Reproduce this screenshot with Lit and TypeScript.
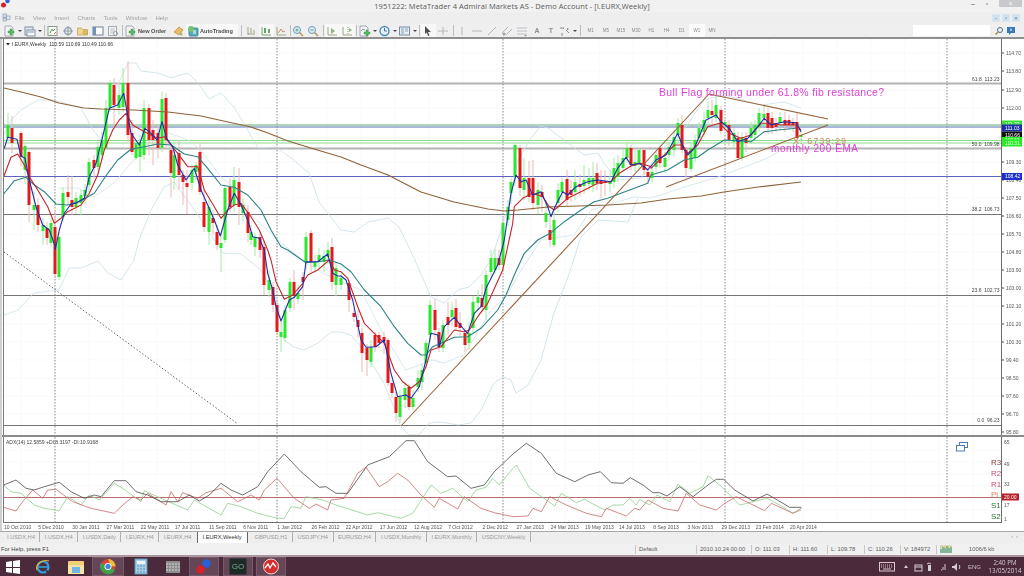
import { LitElement, css, html, svg } from 'lit'
import { customElement } from 'lit/decorators.js'

type Pt = [number, number]

// zoomed crop coords (3x) back to page coords
const seg = (ox: number, oy: number, a: number[]): Pt[] => {
  const out: Pt[] = []
  for (let i = 0; i < a.length; i += 2) out.push([ox + a[i] / 3, oy + a[i + 1] / 3])
  return out
}
const pts = (p: Pt[]) => p.map(([x, y]) => `${x.toFixed(1)},${y.toFixed(1)}`).join(' ')

const BLUE = [
  ...seg(0, 50, [10,295,20,262,48,268,60,318,72,325,85,390,105,470,125,525,145,540,163,590,163,598,175,540,190,490,210,462,225,460,250,445,265,380,285,340,305,260,325,175,350,165,368,130,378,185,390,250,415,285,432,235,450,250,468,270,483,215,497,265,515,290,530,345,555,390,580,355,600,420,620,465,640,510,658,558,680,480,700,430,720,465,740,510,755,560,775,565]),
  ...seg(0, 240, [790,30,800,100,815,150,825,200,840,243,865,180,880,172,905,140,915,65,950,65,980,42,995,100,1010,108]),
  ...seg(340, 200, [0,228,15,240,35,300,60,420,75,442,105,440,130,420,150,520,170,590,195,585,210,595,235,560,255,480,270,400,290,405,295,440,310,380,340,352,370,390,380,400,400,340,420,320,435,265,470,195,490,120]),
  ...seg(340, 60, [510,400,525,345,540,365,555,360,575,405,600,395,620,440,630,470,640,445,665,395,680,405,705,380,740,365,770,360,810,365,830,325,855,292,870,315,895,310,915,325]),
  ...seg(640, 70, [20,300,45,270,75,255,110,190,130,240,140,255,160,235,195,150,225,135,240,155,265,175,290,215,320,205,350,170,370,145,390,165,410,160,430,155,465,158,480,185]),
]
const RED = [
  ...seg(0, 50, [8,380,30,322,50,312,70,345,85,380,110,420,140,470,160,520,180,505,200,485,240,465,265,430,290,375,310,300,335,240,355,210,375,190,395,225,430,245,470,265,490,260,510,285,530,310,560,350,590,350,610,420,640,470,660,505,680,480,700,465,720,460,750,500,775,540]),
  ...seg(0, 240, [800,30,810,60,825,125,850,178,875,165,905,130,920,105,950,90,985,60,1000,90,1020,95]),
  ...seg(340, 200, [20,235,50,320,70,370,100,400,130,430,160,510,185,545,210,565,235,545,255,500,270,450,300,440,340,390,370,395,385,390,410,350,440,310,485,210,515,70]),
  ...seg(340, 60, [520,440,545,415,575,400,605,410,625,440,640,450,680,415,720,395,770,370,810,365,835,340,870,318,900,310,930,320]),
  ...seg(640, 70, [30,295,60,265,100,225,125,225,140,250,170,225,200,170,235,160,265,190,300,205,330,195,360,160,390,160,420,165,465,165,480,180]),
]
const TEAL = [
  ...seg(0, 50, [8,432,40,392,75,382,100,405,130,425,165,462,200,465,240,452,280,430,320,370,350,330,390,298,430,290,470,282,510,285,550,312,590,320,620,355,660,405,700,412,740,435,780,480,810,540,840,590]),
  ...seg(0, 240, [860,30,915,68,950,65,985,60,1020,72]),
  ...seg(340, 200, [30,215,70,270,120,320,160,380,200,430,240,465,255,465,275,440,300,430,340,412,380,410,420,385,470,330,495,285,520,225,550,160,590,120,630,98,670,65,720,30]),
  ...seg(340, 60, [760,425,800,415,840,400,880,385,920,370]),
  ...seg(640, 70, [30,315,80,300,130,270,170,262,200,240,250,210,290,212,330,215,370,185,410,180,465,175]),
]
const BAND_UP: Pt[] = [[3,135],[10,120],[20,110],[37,100],[53,100],[80,108],[92,130],[100,140],[113,93],[127,63],[135,63],[140,71],[157,73],[170,78],[187,73],[197,83],[208,99],[220,93],[233,107],[245,127],[257,148],[275,147],[290,158],[308,173],[318,202],[340,230],[353,232],[367,222],[387,218],[398,227],[413,258],[430,297],[443,303],[457,290],[468,287],[480,275],[490,260],[500,230],[507,207],[517,160],[530,138],[540,126],[547,128],[567,143],[583,155],[597,153],[603,163],[617,180],[640,178],[660,150],[683,130],[703,100],[723,95],[760,105],[783,102],[800,108]]
const BAND_LOW: Pt[] = [[3,315],[17,310],[33,293],[58,290],[68,268],[80,268],[97,261],[107,273],[120,280],[133,260],[138,240],[150,210],[163,187],[173,182],[190,205],[222,253],[240,254],[260,270],[277,303],[283,340],[293,347],[303,350],[317,343],[330,332],[340,332],[350,335],[360,347],[373,367],[383,383],[395,413],[400,427],[408,435],[418,435],[428,423],[440,422],[457,425],[470,423],[480,410],[493,383],[502,377],[510,380],[515,393],[527,385],[540,360],[553,313],[567,277],[580,237],[597,220],[627,222],[633,207],[637,198]]
const BAND_MID: Pt[] = [[57,188],[77,188],[93,197],[113,183],[133,160],[150,140],[168,133],[187,140],[200,150],[220,177],[233,187],[250,215],[277,240],[305,263],[320,272],[337,280],[360,290],[380,330],[405,370],[432,360],[443,363],[463,355],[490,310],[505,297],[517,275],[540,240],[573,235],[590,210],[633,197],[647,198],[660,195],[683,187],[697,183],[717,177],[767,158],[777,152]]
const EMA200 = [[3,88],[20,92],[40,97],[58,103],[83,108],[100,109],[133,110],[167,112],[200,116],[227,122],[250,127],[267,133],[287,141],[313,149],[340,157],[360,165],[387,175],[420,192],[453,202],[487,209],[503,211],[517,210],[547,207],[607,205],[640,203],[667,199],[700,196],[723,192],[757,187],[800,182]] as Pt[]

// x, top, bottom, colour, wick top, wick bottom
const BARS: [number, number, number, string, number?, number?][] = [
  [7,125,138,'g',113,142],[11,128,143,'r',116,153],[20,133,157,'r'],[24,146,170,'g',143,184],[28,152,205,'r',150,222],[33,205,210,'g',192,230],[37,205,225,'r',198,232],[42,225,231,'g',218,245],[46,228,238,'r',222,245],[50,223,243,'g'],[54,227,274,'r',210,278],[58,237,277,'g',232,280],[62,193,217,'g'],[67,192,197,'r',175,205],[71,200,207,'r',176,215],[75,198,207,'g',192,214],[80,195,203,'g',190,215],[84,190,196,'g',184,204],
  [88,162,185,'g',158,192],[93,160,168,'r',155,178],[97,147,167,'g',142,172],[101,140,155,'g',132,160],[105,108,148,'g',100,150],[109,83,108,'g',80,112],[113,85,105,'r',78,130],[118,95,108,'g',85,115],[122,83,107,'g',68,112],[127,83,135,'r',61,142],[131,133,152,'r',120,155],[135,143,158,'g',140,160],[139,142,157,'g',135,172],[143,108,155,'g',100,160],[148,108,140,'r',104,155],[152,130,140,'r',120,165],[157,133,148,'r',125,158],[161,99,148,'g',92,152],[165,98,140,'r',93,147],[170,150,173,'r',146,197],[173,155,178,'g',140,190],[178,153,175,'r',140,190],[182,175,182,'r',170,205],[186,183,187,'r',170,214],[191,170,183,'g',165,190],[195,165,172,'g',162,180],[199,152,192,'r',143,195],[203,202,227,'r',190,232],[208,207,232,'g',200,245],[212,218,223,'r',210,235],[216,232,245,'r',225,250],[220,243,248,'g',232,272],[224,188,240,'g',185,243],[229,187,207,'r',178,212],[233,180,205,'g',167,212],[238,182,207,'r',168,225],[242,205,213,'g',198,222],[247,212,233,'r',205,242],[250,232,240,'g',225,245],[254,237,247,'g',233,256],[259,237,250,'r',232,258],
  [263,247,285,'r',240,295],[268,280,290,'g',270,297],[272,287,305,'r',282,312],[276,305,332,'r',300,335],[280,332,337,'g',322,352],[284,310,338,'g',305,342],[289,282,308,'g',278,312],[293,282,296,'r',270,310],[297,293,299,'g',285,304],[302,277,282,'r',272,300],[305,237,262,'g',232,270],[310,233,262,'r',230,272],[314,262,267,'g',255,273],[318,255,262,'g',248,268],[323,256,262,'g',250,272],[327,250,257,'g',242,264],[331,247,282,'r',238,290],[335,268,285,'g',262,296],[340,278,285,'g',272,290],
  [348,283,300,'r',280,312],[353,313,317,'r',308,322],[357,320,327,'r',310,338],[361,333,353,'r',328,372],[366,348,360,'r',344,376],[370,347,362,'g',340,367],[374,335,347,'r',332,352],[378,335,343,'r',332,348],[383,337,341,'r',332,354],[387,340,383,'r',338,386],[391,383,393,'r',380,398],[395,397,413,'r',392,422],[399,397,417,'g',390,423],[404,388,400,'g',382,408],[408,387,407,'r',384,410],[412,398,407,'g',390,410],[417,378,387,'g',370,392],[421,370,382,'g',364,390],[425,343,363,'g',340,368],[429,305,335,'g',300,342],[434,310,330,'r',299,340],[438,332,347,'r',328,352],[442,325,348,'g',320,352],[447,317,325,'r',302,335],[451,310,317,'g',302,326],[455,308,327,'r',299,330],[459,323,328,'r',312,336],[464,333,345,'r',328,352],[468,333,343,'g',322,350],[472,302,328,'g',296,332],[477,297,303,'g',290,310],[481,298,307,'r',284,312],[485,275,310,'g',270,320],[490,258,272,'g',250,278],[494,258,270,'g',249,274],[498,258,265,'r',250,270],[502,223,265,'g',218,272],[507,207,220,'g',200,226],[510,182,193,'g',178,204],[514,145,177,'g',143,186],[519,148,188,'r',145,196],[523,178,190,'g',158,200],[528,178,197,'r',161,202],[532,178,203,'r',160,210],[537,190,205,'g',182,214],[541,192,197,'r',185,212],[545,213,222,'g',200,228],[549,230,240,'r',214,247],[553,220,245,'g',212,247],[557,190,203,'g',183,212],[561,182,192,'g',178,200],[566,179,200,'r',170,206],[570,190,195,'r',180,202],[574,182,192,'g',170,200],[579,184,187,'r',174,196],[583,180,186,'g',165,194],[588,178,184,'g',168,190],[592,178,185,'g',162,192],[596,173,183,'r',163,190],[600,181,184,'r',170,198],[604,181,183,'r',170,196],[609,181,184,'g',170,192],[613,168,182,'g',158,188],[617,163,177,'g',155,182],[622,158,168,'g',150,172],[626,148,158,'g',142,163],[630,148,165,'r',145,170],[634,162,166,'g',150,172],
  [638,150,163,'g',148,170],[643,150,170,'r',148,175],[647,172,177,'r',168,184],[651,172,178,'g',165,182],[655,155,167,'g',152,172],[659,148,163,'r',146,168],[664,158,167,'g',152,173],[668,147,155,'g',142,160],[673,137,150,'g',130,156],[677,123,135,'g',118,142],[681,125,150,'r',115,153],[685,150,168,'r',147,178],[690,148,169,'g',142,172],[694,140,158,'g',135,162],[698,128,138,'g',122,142],[703,120,132,'g',112,137],[707,110,118,'g',102,124],[711,111,115,'r',100,125],[715,105,118,'g',95,122],[720,110,131,'r',106,134],[724,122,125,'g',118,130],[728,125,140,'r',120,146],[733,133,142,'g',128,148],[737,138,158,'r',132,160],[741,137,158,'g',132,161],[745,138,143,'r',132,152],[750,128,138,'g',122,143],[754,125,135,'g',120,140],[758,113,127,'g',108,132],[763,114,118,'g',105,125],[767,113,128,'r',108,134],[771,118,128,'r',112,134],[775,123,127,'r',118,132],[779,117,123,'g',112,130],[784,120,125,'r',112,132],[788,120,125,'r',115,130],[792,122,125,'r',118,132],[796,122,138,'r',112,142],[800,135,137,'g',130,142],
]

const ADX = {
  black: [...seg(0, 430, [8,165,45,150,75,175,100,180,130,170,175,157,210,185,250,205,280,195,300,200,340,152,375,152,405,185,440,195,480,215,530,215,565,195,595,213,625,195,660,160,690,180,725,195,770,170,800,125,850,72,900,125,955,172,975,170,1005,190,1040,190,1100,105,1165,80,1215,32,1240,32,1280,95,1340,140,1365,138,1410,175,1450,165,1480,125,1536,72]), ...seg(512, 430, [40,40,85,70,130,130,185,155,225,135,262,125,295,158,330,160,352,143,390,165,420,188,440,188,462,198,500,170,540,200,585,165,610,148,632,148,665,180,720,213,762,192,830,232,865,232])],
  green: [...seg(0, 430, [8,165,30,185,60,190,100,225,130,235,175,242,200,200,240,225,265,195,295,210,340,160,365,175,420,215,430,182,480,205,560,240,580,210,660,255,680,220,720,230,770,250,830,265,850,265,870,230,900,235,915,200,965,210,1005,225,1100,255,1130,248,1200,265,1235,250,1290,165,1320,190,1355,175,1400,215,1425,180,1455,172,1475,145,1495,165,1536,115]), ...seg(512, 430, [10,105,50,175,125,228,145,190,190,218,215,208,240,222,275,240,300,225,330,225,350,205,370,225,380,208,410,225,432,195,470,215,495,162,530,190,570,170,585,137,620,165,680,225,720,215,762,205,800,225,840,250,865,240])],
  red: [...seg(0, 430, [8,232,45,243,65,215,95,180,125,205,140,180,165,178,215,215,270,235,340,250,360,230,395,200,420,210,440,190,495,225,510,185,530,215,545,188,590,205,615,188,660,175,710,215,750,195,775,210,790,180,828,145,880,205,925,235,945,222,980,240,990,210,1030,205,1070,130,1095,112,1135,170,1160,155,1190,130,1220,150,1260,195,1300,232,1315,205,1370,237,1390,200,1440,235,1480,248,1536,260]), ...seg(512, 430, [45,258,60,235,85,245,110,200,160,225,220,250,265,260,280,235,340,258,365,235,380,240,405,210,450,235,495,243,520,190,560,225,610,240,635,220,670,200,720,225,755,242,775,220,840,250,865,235])],
}

const PRICES: [string, number][] = [['114.70',53],['113.80',71],['112.90',90],['112.00',108],['109.30',162],['108.40',180],['107.50',198],['106.60',216],['105.70',234],['104.80',252],['103.90',270],['103.00',288],['102.10',306],['101.20',324],['100.30',342],['99.40',360],['98.50',378],['97.60',396],['96.70',414],['95.80',432]]
const DATES = ['10 Oct 2010','5 Dec 2010','30 Jan 2011','27 Mar 2011','22 May 2011','17 Jul 2011','11 Sep 2011','6 Nov 2011','1 Jan 2012','26 Feb 2012','22 Apr 2012','17 Jun 2012','12 Aug 2012','7 Oct 2012','2 Dec 2012','27 Jan 2013','24 Mar 2013','19 May 2013','14 Jul 2013','8 Sep 2013','3 Nov 2013','29 Dec 2013','23 Feb 2014','20 Apr 2014']
const SEPS = [54, 276, 502, 724, 946]
const FIBS: [string, number][] = [['61.8  113.23',80.5],['50.0  109.98',145.5],['38.2  106.73',211],['23.6  102.73',291.5],['0.0  96.23',422]]
const TABS = ['I.USDX,H4','I.USDX,H4','I.USDX,Daily','I.EURX,H4','I.EURX,H4','I.EURX,Weekly','GBPUSD,H1','USDJPY,H4','EURUSD,H4','I.USDX,Monthly','I.EURX,Monthly','USDCNY,Weekly']

const doc = svg`<path d="M2 1h6l2 2v8H2z" fill="#f4f6f8" stroke="#7d8a99" stroke-width=".8"/>`
const plus = (x = 7, y = 6) => svg`<path d="M${x - 1} ${y - 3}h2v2h2v2h-2v2h-2v-2h-2v-2h2z" fill="#36b24a" stroke="#1e7a2c" stroke-width=".4"/>`
const chartBars = (c: string) => svg`<path d="M4 2v8M4 9h7M7 3v5M10 5v3" stroke="${c}" stroke-width="1" fill="none"/>`

const ICONS: Record<string, unknown> = {
  newChart: svg`${doc}${plus(8, 7)}`,
  profile: svg`<rect x="2" y="2" width="8" height="8" fill="#dfe6ee" stroke="#6f8296"/><rect x="4" y="5" width="8" height="6" fill="#fff" stroke="#6f8296"/><path d="M5 7h6" stroke="#6f8296"/>`,
  market: svg`<rect x="2" y="1.5" width="9" height="9" fill="#fff" stroke="#7a8d7a"/><path d="M4 8l2-4 1 2 2-2" stroke="#3f9a4a" fill="none"/><path d="M8 9l2-2" stroke="#c65a30"/>`,
  data: svg`<circle cx="7" cy="6" r="3.4" fill="none" stroke="#7d8f9e" stroke-width="1.2"/><path d="M7 1v10M2 6h10" stroke="#7d8f9e"/>`,
  folder: svg`<path d="M1.5 3h4l1 1.5h5V10h-10z" fill="#f2d27a" stroke="#b08f35" stroke-width=".7"/><circle cx="9" cy="7.5" r="2" fill="#e6b84a" stroke="#a9832a" stroke-width=".6"/>`,
  terminal: svg`<rect x="2" y="2" width="10" height="8" fill="#fff" stroke="#56708e"/><rect x="2" y="2" width="3" height="8" fill="#5b83b3"/>`,
  tester: svg`<rect x="2.5" y="1.5" width="8" height="9" fill="#f6f6f6" stroke="#9aa3ab"/><path d="M4 4h5M4 6h5M4 8h3" stroke="#b7bdc3"/><circle cx="9.5" cy="8.5" r="2" fill="none" stroke="#7f8a93"/>`,
  order: svg`${doc}${plus(8, 7)}`,
  expert: svg`<path d="M2 7l5-5 4 3-4 5z" fill="#e9b44a" stroke="#a97b22" stroke-width=".7"/><circle cx="9" cy="9" r="1.6" fill="#b4a079"/>`,
  auto: svg`<rect x="3" y="3" width="9" height="8" rx="1" fill="#3c9fb0" stroke="#2b7583"/><circle cx="5" cy="4" r="3" fill="#5cb85c"/><path d="M7 6h3M7 8h3" stroke="#fff"/>`,
  bar: svg`${chartBars('#8c9a74')}`,
  candle: svg`<path d="M3 10h9M3 2v8" stroke="#6f8a5e"/><rect x="5" y="3" width="2" height="5" fill="#2fa84a"/><rect x="9" y="4" width="2" height="4" fill="#6f8a5e"/>`,
  line: svg`<path d="M3 2v8h9" stroke="#8c9a74" fill="none"/><path d="M4 8l3-4 2 3 2-1" stroke="#c6735a" fill="none"/>`,
  zoomIn: svg`<circle cx="6" cy="5" r="3.5" fill="#dceaf5" stroke="#4f8cbd"/><path d="M8.5 7.5L12 11" stroke="#b58a40" stroke-width="1.6"/><path d="M4.5 5h3M6 3.5v3" stroke="#3fa34d"/>`,
  zoomOut: svg`<circle cx="6" cy="5" r="3.5" fill="#dceaf5" stroke="#4f8cbd"/><path d="M8.5 7.5L12 11" stroke="#b58a40" stroke-width="1.6"/><path d="M4.5 5h3" stroke="#3fa34d"/>`,
  scroll: svg`<path d="M3 2v8h9" stroke="#8c9a74" fill="none"/><path d="M6 3l4 3-4 3z" fill="#86a36a"/>`,
  shift: svg`<path d="M3 2v8h9" stroke="#8c9a74" fill="none"/><path d="M8 2v7" stroke="#6f8a5e" stroke-dasharray="1 1"/><path d="M9 3l3 2-3 2z" fill="#86a36a"/>`,
  indicators: svg`${doc}${plus(9, 8)}<path d="M3 6l2-2 2 1" stroke="#7d8a99" fill="none"/>`,
  clock: svg`<circle cx="6.5" cy="6" r="4.5" fill="#eaf2f8" stroke="#2f7fb5" stroke-width="1.4"/><path d="M6.5 3v3h2.5" stroke="#2c5f85" fill="none"/>`,
  template: svg`<rect x="1.5" y="2" width="10" height="8" fill="#e9eef2" stroke="#5f7f9a"/><path d="M3 4h3M3 6h3M3 8h3M7 4h3M7 6h3" stroke="#7b95aa"/>`,
  cursor: svg`<path d="M4 1l6 6H7l1.5 3.5-1.4.5L5.700 7.500 4 9z" fill="#2f3338"/>`,
  cross: svg`<path d="M7 2v8M2 6h10" stroke="#a9aeb3"/>`,
  vline: svg`<path d="M7 2v8" stroke="#a9aeb3"/>`,
  hline: svg`<path d="M2 6h10" stroke="#a9aeb3"/>`,
  trend: svg`<path d="M3 10l8-8" stroke="#a9aeb3"/>`,
  channel: svg`<path d="M2 8l6-6M6 10l6-6" stroke="#a9aeb3"/><circle cx="4" cy="9" r="1.500" fill="#8b949c"/>`,
  fib: svg`<path d="M2 3h10M2 6h10M2 9h10" stroke="#b3b8bd"/><path d="M9 10l3 0-1.500 1.500z" fill="#80878e"/>`,
  arrows: svg`<path d="M2 3h4l-1 1M8 5l3 3M4 8v3" stroke="#6f7a84" fill="none"/><path d="M9 3l2 1-2 1z" fill="#5b6670"/>`,
}

const TOOLS: { n?: string; w: number; dd?: boolean; t?: string; on?: boolean; glyph?: string; sep?: boolean }[] = [
  { n: 'newChart', w: 20, dd: true }, { n: 'profile', w: 20, dd: true }, { sep: true, w: 3 },
  { n: 'market', w: 15 }, { n: 'data', w: 15 }, { n: 'folder', w: 15 }, { n: 'terminal', w: 15 }, { n: 'tester', w: 15 }, { sep: true, w: 3 },
  { n: 'order', w: 48, t: 'New Order' }, { n: 'expert', w: 14 }, { n: 'auto', w: 52, t: 'AutoTrading', on: true }, { sep: true, w: 6 },
  { n: 'bar', w: 15 }, { n: 'candle', w: 15, on: true }, { n: 'line', w: 15 }, { sep: true, w: 2 },
  { n: 'zoomIn', w: 15 }, { n: 'zoomOut', w: 15 }, { sep: true, w: 4 },
  { n: 'scroll', w: 15, on: true }, { n: 'shift', w: 15, on: true }, { sep: true, w: 3 },
  { n: 'indicators', w: 20, dd: true }, { n: 'clock', w: 20, dd: true }, { n: 'template', w: 20, dd: true }, { sep: true, w: 3 },
  { n: 'cursor', w: 15, on: true }, { n: 'cross', w: 15 }, { sep: true, w: 4 }, { n: 'vline', w: 15 }, { n: 'hline', w: 15 }, { n: 'trend', w: 15 }, { n: 'channel', w: 15 }, { n: 'fib', w: 15 },
  { w: 14, glyph: 'A' }, { w: 14, glyph: 'T' }, { n: 'arrows', w: 20, dd: true }, { sep: true, w: 5 },
]
const PERIODS = ['M1', 'M5', 'M15', 'M30', 'H1', 'H4', 'D1', 'W1', 'MN']
const STATUS = ['Default', '2010.10.24 00:00', 'O: 111.03', 'H: 111.60', 'L: 109.78', 'C: 110.26', 'V: 184972']

@customElement('app-root')
export class AppRoot extends LitElement {
  static styles = css`
    :host {
      display: block;
      width: 1024px;
      height: 576px;
      overflow: hidden;
      background: #f0f0f0;
      font-family: "Liberation Sans", Arial, sans-serif;
      color: #555;
    }
    .app { display: flex; flex-direction: column; height: 576px; filter: blur(0.3px); }

    .title { display: grid; grid-template-columns: 1fr auto 1fr; align-items: center; height: 12px; background: #f1f1f1; }
    .title .name { font: 7.500px "Open Sans", sans-serif; color: #5a5a5a; letter-spacing: 0.01em; }
    .logo { width: 12px; height: 12px; display: block; margin-left: 0; }
    .winbtns { display: flex; justify-content: flex-end; align-items: flex-start; height: 12px; }
    .winbtn { width: 14px; height: 8px; font-size: 7px; line-height: 7px; text-align: center; color: #555; }
    .winbtn.close { width: 23px; height: 7px; background: #c7c9cc; color: #fff; margin-left: 5px; margin-right: 2px; }

    .menu { display: flex; align-items: center; height: 12px; background: #eeeeee; font-size: 6px; color: #a3a3a3; }
    .menu svg { width: 9px; height: 9px; margin: 0 4px 0 2px; }
    .menu span { margin-right: 8.300px; }
    .mdi { margin-left: auto; display: flex; gap: 2px; margin-right: 4px; }
    .mdi b { width: 8px; height: 8px; background: #cfe0ee; border: 1px solid #dce6ee; box-sizing: border-box; font: 6px/6px "Liberation Sans", sans-serif; color: #6d7f90; text-align: center; }

    .toolbar { display: flex; align-items: center; height: 14px; padding-left: 3px; background: #efefef; border-bottom: 1px solid #8f8f8f; font-weight: 700; }
    .tb { display: flex; align-items: center; height: 13px; flex: none; font-size: 5.600px; color: #4f4f4f; }
    .tb svg { width: 14px; height: 12px; flex: none; opacity: 0.85; }
    .tb.on { background: #f8f8f8; }
    .tb.glyph { justify-content: center; font-size: 7px; color: #8f8f8f; }
    .tb.sep::after { content: ""; width: 1px; height: 11px; margin: 0 auto; background: #bdbdbd; }
    .dd { width: 0; height: 0; margin-left: 1px; border: 2px solid transparent; border-top: 2.500px solid #4a4a4a; border-bottom: 0; }
    .period { display: flex; align-items: center; justify-content: center; width: 15.200px; height: 13px; flex: none; font-size: 4.500px; font-weight: 400; color: #8a8a8a; }
    .period.on { background: #fbfbfb; }
    .search { width: 77px; height: 11px; margin-left: auto; background: #fff; }
    .tail { display: flex; align-items: center; gap: 2px; width: 34px; padding-left: 4px; box-sizing: border-box; }
    .tail svg { width: 10px; height: 10px; }

    .charts { display: flex; flex-direction: column; flex: none; height: 494px; padding-left: 2px; background: #fff; border-top: 1px solid #8f8f8f; border-bottom: 1px solid #a8a8a8; box-sizing: border-box; position: relative; }
    .charts::before { content: ""; position: absolute; left: 0; top: 0; bottom: 0; width: 2px; background: #cfcfcf; }
    svg.pane { display: block; width: 1022px; flex: none; }
    .pane text { font-family: "Liberation Sans", Arial, sans-serif; }

    .tabs { display: flex; align-items: flex-start; height: 11px; background: #eeeeee; font-size: 5.700px; color: #9a9a9a; }
    .tab { padding: 1px 4.500px 0; height: 9px; line-height: 8px; border-right: 1px solid #b0b0b0; flex: none; }
    .tab:first-child { padding-left: 7px; }
    .tab.pre { border-right: 0; padding-right: 5.500px; }
    .tab.on { background: #fff; color: #333; border: 1px solid #666; border-top: 0; padding: 1px 5.500px 0 4.500px; height: 10px; }
    .tab.on + .tab { padding-left: 6.500px; }
    .scroller { margin-left: auto; margin-right: 3px; padding-top: 1px; letter-spacing: 3px; color: #999; }

    .status { display: grid; grid-template-columns: 635px 61px 55px 38px 38px 37px 36px 36px 33px 1fr; align-items: center; height: 12px; background: #f0f0f0; font-size: 5.800px; color: #606060; }
    .status div { border-left: 1px solid #c8c8c8; padding-left: 3px; white-space: nowrap; height: 9px; line-height: 9px; }
    .status div:first-child { border: 0; padding-left: 1px; color: #444; }
    .status div.bare { border: 0; padding-left: 0; }
    .status svg { width: 12px; height: 8px; display: block; }

    .taskbar { display: flex; align-items: center; height: 19px; flex: none; background: #4b2b3b; border-top: 2px solid #ac96a0; }
    .cell { display: flex; align-items: center; justify-content: center; height: 19px; flex: none; }
    .cell.active { background: #644656; box-shadow: inset 0 0 0 1px #77596a; }
    .cell svg { width: 18px; height: 17px; }
    .tray { display: flex; align-items: center; margin-left: auto; color: #c9bcc3; font-size: 6px; }
    .tray svg { display: block; }
    .tray-mid { margin-left: 9px; }
    .tray-vol { margin: 0 7px 0 5px; }
    .clock { text-align: center; line-height: 8px; font: 6.200px/8px "Open Sans", sans-serif; width: 38px; color: #d6cbd1; margin-left: 5px; }
  `

  private linePath(p: Pt[], stroke: string, w = 1) {
    return svg`<polyline points=${pts(p)} fill="none" stroke=${stroke} stroke-width=${w} stroke-linejoin="round"/>`
  }

  private grid(y0: number, y1: number, ys: number[]) {
    const xs: number[] = []
    for (let x = 20; x < 1000; x += 34) xs.push(x)
    return svg`<g stroke="#f1f1f1" stroke-width="1" stroke-dasharray="1 1.500">
      ${xs.map((x) => svg`<line x1=${x} x2=${x} y1=${y0} y2=${y1}/>`)}
      ${ys.map((y) => svg`<line x1="3" x2="1000" y1=${y} y2=${y}/>`)}
    </g>`
  }

  private candles() {
    let seed = 7
    const rnd = () => ((seed = (seed * 137 + 71) % 1009) / 1009)
    return BARS.map(([x, top, bot, c, wt, wb]) => {
      const t = wt ?? top - 2 - rnd() * 8
      const b = wb ?? bot + 2 + rnd() * 8
      return svg`<line x1=${x} x2=${x} y1=${t} y2=${b} stroke=${c === 'r' ? '#edb8b8' : '#a4eca4'}/>
        <rect x=${x - 1.5} y=${top} width="3" height=${bot - top} fill=${c === 'r' ? '#e11b1b' : '#2fe62f'}/>`
    })
  }

  private priceTag(y: number, fill: string, label: string, color = '#fff') {
    return svg`<rect x="1001" y=${y - 3.500} width="20" height="7" fill=${fill}/><text x="1004" y=${y + 1.800} font-size="5" fill=${color}>${label}</text>`
  }

  private mainChart() {
    return html`<svg class="pane" viewBox="1 39 1022 398" height="398">
      ${this.grid(39, 435, PRICES.map((p) => p[1]))}
      <g stroke="#b3b3b3" stroke-width="2"><line x1="3" x2="1000" y1="83.500" y2="83.500"/><line x1="3" x2="1000" y1="148.500" y2="148.500"/></g>
      <g stroke="#757575" stroke-width="1"><line x1="3" x2="1000" y1="214.500" y2="214.500"/><line x1="3" x2="1000" y1="295.500" y2="295.500"/><line x1="3" x2="1000" y1="425.500" y2="425.500"/></g>
      <line x1="3" x2="1000" y1="125" y2="125" stroke="#5faa76"/>
      <line x1="3" x2="1000" y1="127" y2="127" stroke="#5470b5"/>
      <line x1="3" x2="1000" y1="176.500" y2="176.500" stroke="#5d64bd"/>
      <line x1="3" x2="1000" y1="140.500" y2="140.500" stroke="#8ddc8d"/>
      <line x1="3" x2="1000" y1="143" y2="143" stroke="#8ddc8d"/>
      ${SEPS.map((x) => svg`<line x1=${x} x2=${x} y1="39" y2="436" stroke="#8a8a8a" stroke-dasharray="1.500 1.500"/>`)}
      <line x1="3" y1="252" x2="237" y2="424" stroke="#666" stroke-dasharray="1.500 2"/>
      ${this.linePath(BAND_UP, '#c8e0e8', 0.8)}
      ${this.linePath(BAND_LOW, '#c8e0e8', 0.8)}
      ${this.linePath(BAND_MID, '#cde3e8', 0.8)}
      ${this.candles()}
      ${this.linePath(EMA200, '#8f6238', 1.200)}
      ${this.linePath(TEAL, '#2a8285', 1.100)}
      ${this.linePath(RED, '#c2262c', 1.100)}
      ${this.linePath(BLUE, '#1c2fa8', 1.100)}
      <g stroke="#9a6238" stroke-width="1.100">
        <line x1="400" y1="426" x2="708" y2="94"/>
        <line x1="708" y1="94" x2="827" y2="119"/>
        <line x1="665" y1="187" x2="827" y2="125"/>
      </g>
      <text x="658" y="96" font-size="10.500" fill="#e040d8" textLength="225">Bull Flag forming under 61.8% fib resistance?</text>
      <text x="770" y="152" font-size="10" fill="#df3fd6" textLength="87">monthly 200 EMA</text>
      <text x="792" y="144" font-size="9" fill="#c98a63" textLength="53">X: 6739:29</text>
      <path d="M5 43h4l-2 2.500z" fill="#222"/>
      <text x="11" y="46" font-size="5" fill="#333">I.EURX,Weekly&#160;&#160;110.59 110.69 110.49 110.66</text>
      ${FIBS.map(([t, y]) => svg`<text x="998.500" y=${y} font-size="5" fill="#444" text-anchor="end" xml:space="preserve">${t}</text>`)}
      <line x1="2.500" x2="2.500" y1="39" y2="437" stroke="#7a7a7a"/>
      <line x1="1000.500" x2="1000.500" y1="39" y2="437" stroke="#6b6b6b"/>
      ${PRICES.map(([t, y]) => svg`<line x1="1001" x2="1003" y1=${y} y2=${y} stroke="#444"/><text x="1005" y=${y + 1.800} font-size="5" fill="#555">${t}</text>`)}
      ${this.priceTag(124, '#33e233', '111.22')}
      ${this.priceTag(128, '#1c2fa8', '111.03')}
      ${this.priceTag(135, '#111', '110.66')}
      ${this.priceTag(140.500, '#22ee22', '110.51')}
      ${this.priceTag(143, '#22ee22', '110.31')}
      ${this.priceTag(176.500, '#1c2fc8', '108.42')}
      <line x1="1" x2="1023" y1="436" y2="436" stroke="#8a8a8a" stroke-width="2"/>
    </svg>`
  }

  private subChart() {
    const labels: [string, number, string][] = [['R3', 465, '#8e3a3a'], ['R2', 476, '#c8506e'], ['R1', 486.500, '#c8506e'], ['Pi', 497, '#e3824f'], ['S1', 508, '#2d7d2d'], ['S2', 519, '#2d7d2d']]
    return html`<svg class="pane" viewBox="1 437 1022 95" height="95">
      ${this.grid(438, 522, [450, 462, 474, 486, 510])}
      ${SEPS.map((x) => svg`<line x1=${x} x2=${x} y1="437" y2="522" stroke="#8a8a8a" stroke-dasharray="1.500 1.500"/>`)}
      <line x1="3" x2="1000" y1="497.500" y2="497.500" stroke="#b86e6a"/>
      ${this.linePath(ADX.green, '#8fcf8f', 0.8)}
      ${this.linePath(ADX.red, '#c96a68', 0.8)}
      ${this.linePath(ADX.black, '#4a4a4a', 0.8)}
      <text x="5" y="443.500" font-size="5" fill="#444">ADX(14) 12.5859 +DI:8.3197 -DI:10.9168</text>
      <g fill="#fff" stroke="#4d7cb4" stroke-width="1"><rect x="958.500" y="442.500" width="8" height="5"/><rect x="955.500" y="445.500" width="8" height="5.500"/></g>
      ${labels.map(([t, y, c]) => svg`<text x="990" y=${y} font-size="8" fill=${c}>${t}</text>`)}
      <line x1="2.500" x2="2.500" y1="437" y2="523" stroke="#7a7a7a"/>
      <line x1="3" x2="1000" y1="522.500" y2="522.500" stroke="#707070"/>
      <line x1="1000.500" x2="1000.500" y1="437" y2="523" stroke="#6b6b6b"/>
      ${[['65', 442], ['49', 464], ['33', 484], ['17', 505.500], ['1', 519.500]].map(([t, y]) => svg`<text x="1003" y=${+y + 1.800} font-size="5" fill="#555">${t}</text>`)}
      <rect x="1001" y="493.500" width="17" height="7" fill="#b8222c"/>
      <text x="1003" y="499" font-size="5" fill="#fff">20.00</text>
      ${DATES.map((d, i) => svg`<text x=${3 + i * 34.170} y="529" font-size="5" fill="#555">${d}</text>`)}
    </svg>`
  }

  private titleBar() {
    return html`<div class="title">
      <svg class="logo" viewBox="0 0 12 12"><circle cx="7.500" cy="1" r="2.200" fill="#2a5fd8"/><circle cx="3.500" cy="5" r="2.500" fill="#d8202a"/></svg>
      <div class="name">1951222: MetaTrader 4 Admiral Markets AS - Demo Account - [I.EURX,Weekly]</div>
      <div class="winbtns"><span class="winbtn">–</span><span class="winbtn">▫</span><span class="winbtn close">×</span></div>
    </div>`
  }

  private menuBar() {
    return html`<div class="menu">
      <svg viewBox="0 0 9 9"><rect x="1" y="1" width="3.500" height="3.500" fill="#cfd9e6" stroke="#7f95ae" stroke-width=".6"/><rect x="4.500" y="3" width="3.500" height="3.500" fill="#dfe7ef" stroke="#7f95ae" stroke-width=".6"/><rect x="1" y="5" width="3.500" height="3" fill="#cfd9e6" stroke="#7f95ae" stroke-width=".6"/></svg>
      ${['File', 'View', 'Insert', 'Charts', 'Tools', 'Window', 'Help'].map((m) => html`<span>${m}</span>`)}
      <div class="mdi"><b>-</b><b>▫</b><b>×</b></div>
    </div>`
  }

  private toolBar() {
    return html`<div class="toolbar">
      ${TOOLS.map((t) => t.sep
        ? html`<div class="tb sep" style="width:${t.w}px"></div>`
        : t.glyph
          ? html`<div class="tb glyph" style="width:${t.w}px">${t.glyph}</div>`
          : html`<div class="tb ${t.on ? 'on' : ''}" style="width:${t.w}px">
              <svg viewBox="0 0 14 12">${ICONS[t.n!]}</svg>${t.t ?? ''}${t.dd ? html`<i class="dd"></i>` : ''}
            </div>`)}
      ${PERIODS.map((p) => html`<div class="period ${p === 'W1' ? 'on' : ''}">${p}</div>`)}
      <div class="search"></div>
      <div class="tail">
        <svg viewBox="0 0 10 10"><circle cx="6" cy="4" r="2.500" fill="none" stroke="#4f6f8c"/><path d="M4 6L1.500 8.500" stroke="#b08a3c" stroke-width="1.400"/></svg>
        <svg viewBox="0 0 10 10"><path d="M1 1h8v6H5l-2 2V7H1z" fill="#3a78b8"/><path d="M5 2.500V5" stroke="#fff"/></svg>
      </div>
    </div>`
  }

  private tabBar() {
    return html`<div class="tabs">
      ${TABS.map((t, i) => html`<div class="tab ${i === 5 ? 'on' : ''} ${i === 4 ? 'pre' : ''}">${t}</div>`)}
      <div class="scroller">‹›</div>
    </div>`
  }

  private statusBar() {
    return html`<div class="status">
      <div>For Help, press F1</div>
      ${STATUS.map((s) => html`<div>${s}</div>`)}
      <div><svg viewBox="0 0 12 8"><rect width="12" height="8" fill="#d9dfc6"/><path d="M1 4v4M3 2v6M5 3v5M7 1v7M9 3v5M11 2v6" stroke="#2f8f6a"/><path d="M0 2h12" stroke="#c9a830" stroke-dasharray="1 1"/></svg></div>
      <div class="bare">1006/6 kb</div>
    </div>`
  }

  private taskBar() {
    const cells: [number, boolean, unknown][] = [
      [26, false, svg`<path d="M2 4l6-1v6H2zM9 3l7-1v7H9zM2 10h6v5l-6-1zM9 10h7v6l-7-1z" fill="#fff"/>`],
      [33, false, svg`<circle cx="9" cy="9" r="5.500" fill="none" stroke="#2f9fe0" stroke-width="2.200"/><path d="M4 9h10" stroke="#2f9fe0" stroke-width="1.600"/><path d="M12 13l3 1" stroke="#4b2b3b" stroke-width="2"/><path d="M3 12C1 6 9 1 15 3" fill="none" stroke="#e5b52d" stroke-width="1.200"/>`],
      [33, false, svg`<rect x="1" y="3" width="16" height="13" rx="1" fill="#f0cf75"/><rect x="1" y="7" width="16" height="9" fill="#f7e3a3"/><rect x="5" y="9" width="8" height="6" fill="#6db6e6"/>`],
      [32, true, svg`<circle cx="9" cy="8.500" r="7.500" fill="#d9433a"/><path d="M9 8.500L16 12A7.500 7.500 0 0 1 5 15z" fill="#3fa14a"/><path d="M9 8.500L5 15A7.500 7.500 0 0 1 1.700 5z" fill="#3fa14a"/><path d="M9 1A7.500 7.500 0 0 1 16.500 8.500L12 8z" fill="#efc12f"/><circle cx="9" cy="8.500" r="3.200" fill="#3f86dd" stroke="#fff"/>`],
      [33, false, svg`<rect x="3" y="1" width="12" height="15" fill="#a9cfe8" stroke="#5f92b8"/><rect x="5" y="3" width="8" height="3" fill="#e9f4fb"/><path d="M5 8h8M5 11h8M5 14h8" stroke="#5d8fb5" stroke-dasharray="2 1"/>`],
      [32, false, svg`<rect x="2" y="3" width="14" height="12" fill="#8d8d8d"/><path d="M2 6h14M2 9h14M2 12h14" stroke="#d4d4d4" stroke-dasharray="2 1"/>`],
      [30, true, svg`<circle cx="11.500" cy="5.500" r="4.200" fill="#2a5fd8"/><circle cx="5.500" cy="11.500" r="4.200" fill="#d8202a"/>`],
      [4, false, ''],
      [30, true, svg`<rect x="0.500" y="0.500" width="17" height="16" fill="#1d2a26"/><text x="9" y="11" text-anchor="middle" font-family="Liberation Sans, sans-serif" font-size="8" fill="#79a88b">GO</text>`],
      [3, false, ''],
      [30, true, svg`<circle cx="9" cy="8.500" r="7.500" fill="#d42c2c" stroke="#f5d5d5"/><path d="M3 10l3-4 2 4 3-5 3 4" fill="none" stroke="#fff" stroke-width="1.300"/>`],
    ]
    return html`<div class="taskbar">
      ${cells.map(([w, on, ic]) => html`<div class="cell ${on ? 'active' : ''}" style="width:${w}px">${ic ? html`<svg viewBox="0 0 18 17">${ic}</svg>` : ''}</div>`)}
      <div class="tray">
        <svg width="16" height="10" viewBox="0 0 16 10"><rect x=".5" y=".5" width="15" height="8.500" fill="none" stroke="#d5cbd0"/><path d="M2 3h12M2 5h12" stroke="#d5cbd0" stroke-dasharray="1 1"/><path d="M4 7h8" stroke="#d5cbd0"/></svg>
        <svg class="tray-mid" width="42" height="10" viewBox="0 0 42 10"><path d="M0 6l2-3 2 3z" fill="#d5cbd0"/><rect x="11" y="3" width="7" height="6" fill="none" stroke="#d5cbd0"/><path d="M11 5h7" stroke="#d5cbd0"/><rect x="24" y="3" width="3" height="6" fill="#d5cbd0"/><path d="M23 2l2-1 2 1" stroke="#d5cbd0" fill="none"/><path d="M37 8h1M39 8V5M41 8V2" stroke="#d5cbd0"/></svg>
        <svg class="tray-vol" width="10" height="10" viewBox="0 0 10 10"><path d="M1 4h2l3-3v8L3 6H1z" fill="#d5cbd0"/><path d="M8 3c1 1 1 3 0 4" stroke="#d5cbd0" fill="none"/></svg>
        <span>ENG</span>
        <div class="clock">2:40 PM<br />13/05/2014</div>
      </div>
    </div>`
  }

  render() {
    return html`<div class="app">
      ${this.titleBar()}
      ${this.menuBar()}
      ${this.toolBar()}
      <div class="charts">
        ${this.mainChart()}
        ${this.subChart()}
      </div>
      ${this.tabBar()}
      ${this.statusBar()}
      ${this.taskBar()}
    </div>`
  }
}

declare global {
  interface HTMLElementTagNameMap {
    'app-root': AppRoot
  }
}
